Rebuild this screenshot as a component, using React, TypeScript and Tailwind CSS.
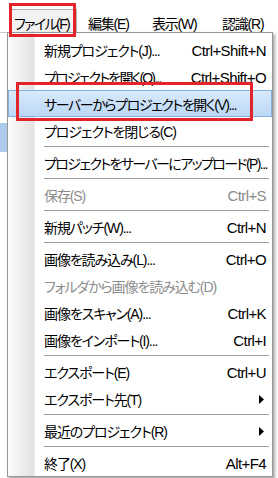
type Entry =
  | { sep: true }
  | {
      sep?: false;
      label: string;
      shortcut?: string;
      disabled?: boolean;
      arrow?: boolean;
      active?: boolean;
      track?: string;
    };

const entries: Entry[] = [
  { label: "新規プロジェクト(J)...", shortcut: "Ctrl+Shift+N" },
  { label: "プロジェクトを開く(O)...", shortcut: "Ctrl+Shift+O", track: "tracking-[-1.8px]" },
  { label: "サーバーからプロジェクトを開く(V)...", active: true, track: "tracking-[-1.4px]" },
  { label: "プロジェクトを閉じる(C)" },
  { sep: true },
  { label: "プロジェクトをサーバーにアップロード(P)...", track: "tracking-[-1.6px]" },
  { sep: true },
  { label: "保存(S)", shortcut: "Ctrl+S", disabled: true },
  { sep: true },
  { label: "新規パッチ(W)...", shortcut: "Ctrl+N" },
  { sep: true },
  { label: "画像を読み込み(L)...", shortcut: "Ctrl+O" },
  { label: "フォルダから画像を読み込む(D)", disabled: true },
  { label: "画像をスキャン(A)...", shortcut: "Ctrl+K" },
  { label: "画像をインポート(I)...", shortcut: "Ctrl+I" },
  { sep: true },
  { label: "エクスポート(E)", shortcut: "Ctrl+U" },
  { label: "エクスポート先(T)", arrow: true },
  { sep: true },
  { label: "最近のプロジェクト(R)", arrow: true },
  { sep: true },
  { label: "終了(X)", shortcut: "Alt+F4" },
];

function MenuRow({ entry }: { entry: Entry }) {
  if (entry.sep) {
    return (
      <div className="h-[5px] flex items-center ml-[36px] mr-[3px]">
        <div className="h-px w-full bg-[#a0a0a0]" />
      </div>
    );
  }
  const color = entry.disabled ? "text-[#8c8c8c]" : "text-black";
  return (
    <div
      className={
        entry.active
          ? "h-[27px] flex items-center pl-[35px] pr-[5px] pt-[2px] border border-[#84b0e0] bg-[linear-gradient(to_bottom,#d8e9fb,#bcd8f5)]"
          : "h-[27px] flex items-center pl-[36px] pr-[6px] pt-[2px]"
      }
    >
      <span
        className={
          "flex-1 whitespace-nowrap text-[14px] " +
          (entry.track ?? "tracking-[-1.1px]") +
          " " +
          color
        }
      >
        {entry.label}
      </span>
      {entry.shortcut && (
        <span className={"whitespace-nowrap " + color}>{entry.shortcut}</span>
      )}
      {entry.arrow && (
        <svg width="5" height="9" viewBox="0 0 5 9" className="mr-[2px]">
          <path d="M0 0L5 4.5L0 9z" fill="#000" />
        </svg>
      )}
    </div>
  );
}

export default function App() {
  return (
    <div className="relative w-[278px] h-[478px] bg-white overflow-hidden text-[15px] leading-none tracking-[-0.6px] font-['Liberation_Sans','Noto_Sans_CJK_JP',sans-serif] [font-feature-settings:'palt']">
      {/* menu bar */}
      <div className="h-[32px] flex items-stretch pl-[10px] pt-[9px] bg-white text-[14px] tracking-[-1.2px]">
        <div className="w-[67px] mr-[7px] pl-[3px] pt-[7px] bg-[#f2f2f2] border border-b-0 border-[#b0b0b0] whitespace-nowrap tracking-[-1.6px]">
          ファイル(F)
        </div>
        <div className="w-[64px] pl-[4px] pt-[8px] whitespace-nowrap">編集(E)</div>
        <div className="w-[70px] pl-[4px] pt-[8px] whitespace-nowrap">表示(W)</div>
        <div className="pl-[4px] pt-[8px] whitespace-nowrap">認識(R)</div>
      </div>

      <div className="flex">
        {/* app content behind the menu */}
        <div className="w-[7px] shrink-0 flex flex-col">
          <div className="h-[91px] border-t border-[#c8c8c8]" />
          <div className="h-[29px] bg-[#adcbeb]" />
        </div>

        {/* dropdown */}
        <div className="w-[266px] border border-[#979797] pt-[3px] bg-[linear-gradient(to_right,#fbfbfb_0px,#e2e2e2_26px,#ffffff_27px)] shadow-[2px_2px_3px_rgba(0,0,0,0.35)]">
          {entries.map((e, i) => (
            <MenuRow key={i} entry={e} />
          ))}
        </div>
      </div>

      {/* red annotation boxes */}
      <div className="absolute left-[9px] top-[3px] w-[67px] h-[34px] border-[3px] border-[#e3242b]" />
      <div className="absolute left-[16px] top-[82px] w-[237px] h-[39px] border-[3px] border-[#e3242b]" />
    </div>
  );
}
